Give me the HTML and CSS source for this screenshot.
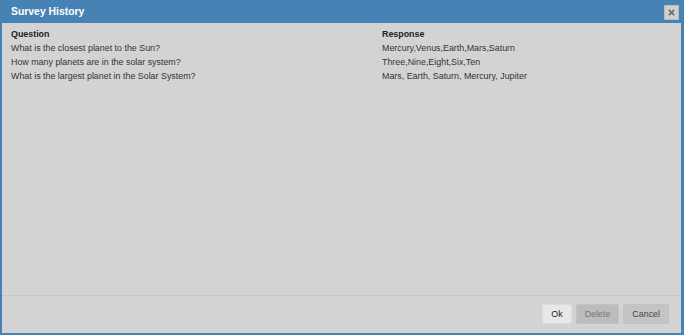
FILE: index.html
```html
<!DOCTYPE html>
<html lang="en">
<head>
  <meta charset="UTF-8" />
  <title>Survey History</title>
  <link rel="stylesheet" href="styles.css">
</head>
<body>
  <div class="dialog">
    <div class="titlebar">
      <span class="title">Survey History</span>
      <button class="close" title="Close">
        <svg width="7" height="7" viewBox="0 0 8 8"><path d="M1 1 L7 7 M7 1 L1 7" stroke="#6b6b6b" stroke-width="2"/></svg>
      </button>
    </div>
    <div class="content">
      <table class="history">
        <thead>
          <tr><th class="q">Question</th><th>Response</th></tr>
        </thead>
        <tbody>
          <tr><td>What is the closest planet to the Sun?</td><td>Mercury,Venus,Earth,Mars,Saturn</td></tr>
          <tr><td>How many planets are in the solar system?</td><td>Three,Nine,Eight,Six,Ten</td></tr>
          <tr><td>What is the largest planet in the Solar System?</td><td>Mars, Earth, Saturn, Mercury, Jupiter</td></tr>
        </tbody>
      </table>
    </div>
    <div class="buttons">
      <button class="btn ok">Ok</button>
      <button class="btn disabled">Delete</button>
      <button class="btn">Cancel</button>
    </div>
  </div>
</body>
</html>
```

FILE: styles.css
```css
html, body {
  margin: 0;
  padding: 0;
  height: 100%;
  font-family: 'Liberation Sans', Arial, sans-serif;
  font-size: 8.9px;
  color: #333;
}

.dialog {
  box-sizing: border-box;
  height: 335px;
  background: #4682b4;
  padding: 0 3px 2px 2px;
  display: flex;
  flex-direction: column;
}

.titlebar {
  height: 23px;
  display: flex;
  align-items: center;
  justify-content: space-between;
  padding: 0 2px 0 9px;
}

.title {
  color: #fff;
  font-weight: bold;
  font-size: 10.4px;
}

.close {
  width: 15px;
  height: 15px;
  padding: 0;
  margin-top: 1px;
  border: 1px solid #b8bcc0;
  background: #d0d0d0;
  display: flex;
  align-items: center;
  justify-content: center;
}

.content {
  flex: 1;
  background: #d3d3d3;
  padding: 4px 9px;
  border-bottom: 1px solid #c6c6c6;
}

.history {
  width: 100%;
  border-collapse: collapse;
}

.history th,
.history td {
  text-align: left;
  padding: 0;
  height: 14px;
  vertical-align: middle;
  color: #333;
}

.history th {
  color: #222;
}

.history .q {
  width: 371px;
}

.buttons {
  background: #d3d3d3;
  height: 37px;
  display: flex;
  justify-content: flex-end;
  align-items: flex-start;
  gap: 4px;
  padding: 8px 12px 0 0;
  box-sizing: border-box;
}

.btn {
  font-family: inherit;
  font-size: 8.9px;
  height: 20px;
  padding: 0 8px;
  border: 1px solid #c2c2c2;
  border-radius: 2px;
  background: #c4c4c4;
  color: #444;
}

.btn.ok {
  background: #e8e8e8;
  border-color: #dcdcdc;
  color: #222;
}

.btn.disabled {
  background: #bcbcbc;
  color: #777;
}
```
